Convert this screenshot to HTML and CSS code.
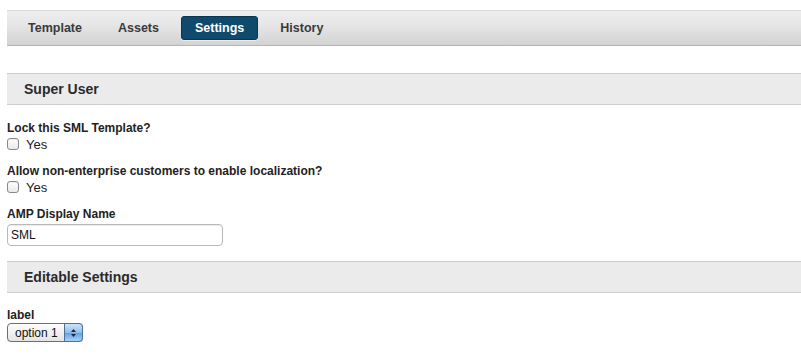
FILE: index.html
```html
<!DOCTYPE html>
<html lang="en">
<head>
    <meta charset="UTF-8">
    <meta name="viewport" content="width=device-width, initial-scale=1.0">
    <title>Settings</title>
    <link rel="stylesheet" href="styles.css">
</head>
<body class="tpl-body">
    <div class="tpl-page">
        <!-- Tabs -->
        <div class="tpl-tabs">
            <a class="tpl-tab" href="#">Template</a>
            <a class="tpl-tab" href="#">Assets</a>
            <a class="tpl-tab tpl-tab-active" href="#">Settings</a>
            <a class="tpl-tab" href="#">History</a>
        </div>

        <div class="tpl-section">Super User</div>

        <div class="tpl-field tpl-first">
            <label class="tpl-label">Lock this SML Template?</label>
            <label class="tpl-check"><input type="checkbox" class="tpl-box"> Yes</label>
        </div>

        <div class="tpl-field">
            <label class="tpl-label">Allow non-enterprise customers to enable localization?</label>
            <label class="tpl-check"><input type="checkbox" class="tpl-box"> Yes</label>
        </div>

        <div class="tpl-field">
            <label class="tpl-label" for="tpl-ampName">AMP Display Name</label>
            <input class="tpl-input" type="text" id="tpl-ampName" value="SML">
        </div>

        <div class="tpl-section tpl-section-2">Editable Settings</div>

        <div class="tpl-field tpl-first-2">
            <label class="tpl-label tpl-plain" for="tpl-option">label</label>
            <div class="tpl-select-wrap">
                <select class="tpl-select" id="tpl-option">
                    <option>option 1</option>
                    <option>option 2</option>
                </select>
                <span class="tpl-stepper">
                    <svg width="7" height="10" viewBox="0 0 7 10">
                        <path d="M3.5 1 L6 4 L1 4 Z" fill="#1a2a3a"/>
                        <path d="M3.5 9 L6 6 L1 6 Z" fill="#1a2a3a"/>
                    </svg>
                </span>
            </div>
        </div>
    </div>
</body>
</html>
```

FILE: styles.css
```css
/* Base */
.tpl-body {
    margin: 0;
    font-family: "Liberation Sans", Arial, sans-serif;
    font-size: 12px;
    color: #222;
    background: #fff;
}

.tpl-page {
    padding: 10px 0 0 7px;
}

/* Tab bar */
.tpl-tabs {
    display: flex;
    align-items: center;
    gap: 8px;
    height: 34px;
    padding-left: 7px;
    border-top: 1px solid #dcdcdc;
    border-bottom: 1px solid #b5b5b5;
    background: linear-gradient(#ededed, #e6e6e6 40%, #d3d3d3);
}

.tpl-tab {
    display: block;
    height: 22px;
    line-height: 22px;
    padding: 0 13px;
    font-size: 12.5px;
    font-weight: bold;
    color: #3a3a3a;
    text-decoration: none;
    border: 1px solid transparent;
    border-radius: 3px;
}

.tpl-tab-active {
    background: #0f4a6d;
    border-color: #0a3550;
    color: #fff;
    box-shadow: 0 1px 0 rgba(255, 255, 255, 0.5);
}

/* Section headers */
.tpl-section {
    margin-top: 27px;
    height: 30px;
    line-height: 30px;
    padding-left: 17px;
    font-size: 14px;
    font-weight: bold;
    color: #2a2a2a;
    background: #ebebeb;
    border-top: 1px solid #cdcdcd;
    border-bottom: 1px solid #cdcdcd;
}

.tpl-section-2 {
    margin-top: 15px;
}

/* Fields */
.tpl-field {
    margin-top: 12px;
}

.tpl-first {
    margin-top: 16px;
}

.tpl-first-2 {
    margin-top: 15px;
}

.tpl-label {
    display: block;
    line-height: 15px;
    font-weight: bold;
    color: #222;
}

.tpl-check {
    display: flex;
    align-items: center;
    height: 16px;
    font-size: 13px;
    color: #222;
}

.tpl-box {
    appearance: none;
    width: 12px;
    height: 12px;
    margin: 0 7px 0 0;
    border: 1px solid #8a8a8a;
    border-radius: 3px;
    background: linear-gradient(#fff, #e9e9e9);
    box-shadow: inset 0 1px 1px rgba(0, 0, 0, 0.08);
}

.tpl-input {
    display: block;
    box-sizing: border-box;
    width: 216px;
    height: 22px;
    margin-top: 2px;
    padding: 0 3px;
    font-family: "Liberation Sans", Arial, sans-serif;
    font-size: 12px;
    color: #111;
    border: 1px solid #b9b9b9;
    border-radius: 4px;
    box-shadow: inset 0 1px 1px rgba(0, 0, 0, 0.08);
}

/* Select */
.tpl-select-wrap {
    position: relative;
    width: 76px;
    height: 19px;
}

.tpl-select {
    appearance: none;
    box-sizing: border-box;
    width: 76px;
    height: 19px;
    padding: 0 0 0 7px;
    font-family: "Liberation Sans", Arial, sans-serif;
    font-size: 12px;
    color: #111;
    border: 1px solid #6f6f6f;
    border-radius: 4px;
    background: linear-gradient(#fdfdfd, #e4e4e4);
    box-shadow: 0 1px 1px rgba(0, 0, 0, 0.15);
}

.tpl-stepper {
    position: absolute;
    top: 0;
    right: 0;
    width: 19px;
    height: 19px;
    box-sizing: border-box;
    display: flex;
    align-items: center;
    justify-content: center;
    border: 1px solid #4f6f94;
    border-radius: 0 4px 4px 0;
    background: linear-gradient(#cfe4f8, #8fbdee 50%, #5d9fe3 51%, #a9d1f7);
}
```
